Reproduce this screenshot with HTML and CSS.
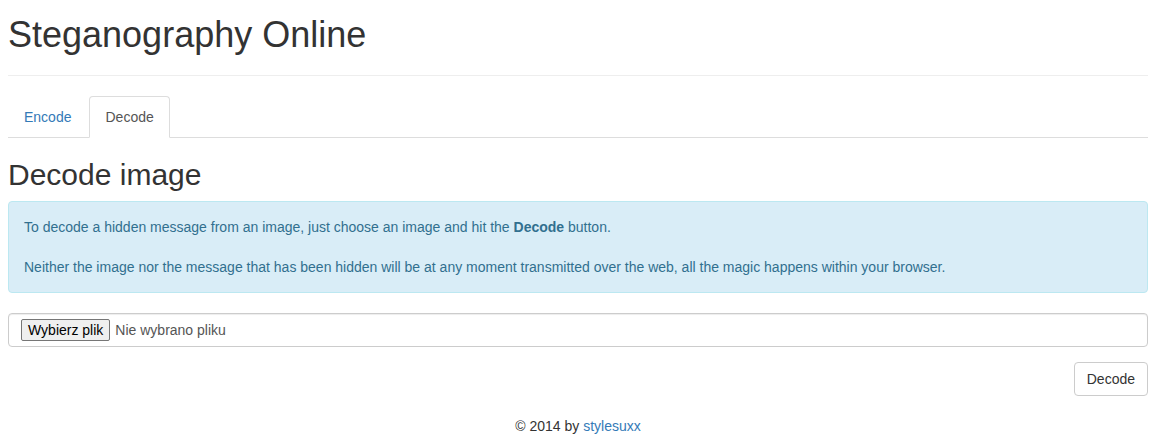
FILE: index.html
```html
<!DOCTYPE html>
<html lang="en">
<head>
<meta charset="utf-8">
<title>Steganography Online</title>
<link rel="stylesheet" href="styles.css">
</head>
<body>
<div class="container">
  <div class="page-header">
    <h1>Steganography Online</h1>
  </div>
  <ul class="nav-tabs">
    <li><a href="#">Encode</a></li>
    <li class="active"><a href="#">Decode</a></li>
  </ul>
  <div class="tab-content">
    <h2>Decode image</h2>
    <div class="alert">
      To decode a hidden message from an image, just choose an image and hit the <b>Decode</b> button.<br><br>
      Neither the image nor the message that has been hidden will be at any moment transmitted over the web, all the magic happens within your browser.
    </div>
    <div class="form-group">
      <div class="form-control file-control">
        <span class="file-btn">Wybierz plik</span>
        <span class="file-name">Nie wybrano pliku</span>
      </div>
    </div>
    <div class="actions">
      <button class="btn" type="button">Decode</button>
    </div>
  </div>
  <footer class="footer">© 2014 by <a href="#">stylesuxx</a></footer>
</div>
</body>
</html>
```
FILE: styles.css
```css
html, body {
  margin: 0;
  padding: 0;
  background: #fff;
}
body {
  font-family: "Liberation Sans", Arial, sans-serif;
  font-size: 14px;
  line-height: 20px;
  color: #333;
}
* { box-sizing: border-box; }
a { color: #337ab7; text-decoration: none; }

.container {
  width: 1140px;
  margin-left: 8px;
}

.page-header {
  padding: 15px 0 10px;
  margin: 0 0 20px;
  border-bottom: 1px solid #eee;
}
.page-header h1 {
  margin: 0 0 10px;
  font-size: 36px;
  font-weight: 500;
  line-height: 40px;
}

.nav-tabs {
  display: flex;
  list-style: none;
  margin: 0;
  padding: 0;
  border-bottom: 1px solid #ddd;
}
.nav-tabs li {
  margin-bottom: -1px;
}
.nav-tabs a {
  display: block;
  padding: 10px 15px;
  line-height: 20px;
  margin-right: 2px;
  border: 1px solid transparent;
  border-radius: 4px 4px 0 0;
}
.nav-tabs .active a {
  color: #555;
  background: #fff;
  border-color: #ddd;
  border-bottom-color: transparent;
}

.tab-content h2 {
  margin: 20px 0 10px;
  font-size: 30px;
  font-weight: 500;
  line-height: 33px;
}

.alert {
  padding: 15px;
  margin-bottom: 20px;
  border: 1px solid #bce8f1;
  border-radius: 4px;
  background: #d9edf7;
  color: #31708f;
}

.form-group { margin-bottom: 15px; }
.form-control {
  height: 34px;
  padding: 6px 12px;
  border: 1px solid #ccc;
  border-radius: 4px;
  box-shadow: inset 0 1px 1px rgba(0,0,0,.075);
  color: #555;
  background: #fff;
}
.file-control {
  display: flex;
  align-items: center;
}
.file-btn {
  display: inline-block;
  padding: 1px 6px;
  line-height: 18px;
  border: 1px solid #767676;
  border-radius: 2px;
  background: #efefef;
  color: #000;
  margin-right: 5px;
}

.actions {
  display: flex;
  justify-content: flex-end;
}
.btn {
  font-family: inherit;
  font-size: 14px;
  line-height: 20px;
  padding: 6px 12px;
  color: #333;
  background: #fff;
  border: 1px solid #ccc;
  border-radius: 4px;
  cursor: pointer;
}

.footer {
  padding-top: 20px;
  text-align: center;
}
```
